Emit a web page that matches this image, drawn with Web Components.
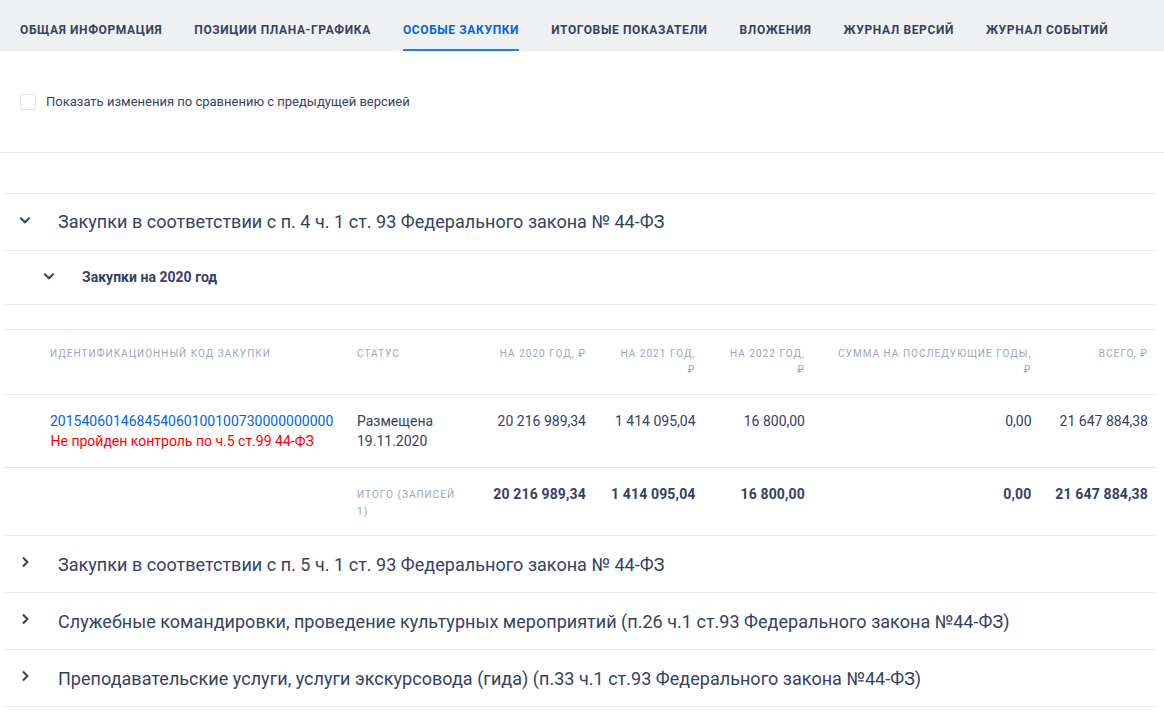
<!DOCTYPE html>
<html lang="ru">
<head>
<meta charset="utf-8">
<title>Особые закупки</title>
<style>
  html, body { margin: 0; padding: 0; background: #fff; overflow: hidden; }
  body { font-family: Roboto, "Liberation Sans", sans-serif; color: #344262; }
</style>
</head>
<body>
<plan-tabs>
  <tab-item>Общая информация</tab-item>
  <tab-item>Позиции плана-графика</tab-item>
  <tab-item active>Особые закупки</tab-item>
  <tab-item>Итоговые показатели</tab-item>
  <tab-item>Вложения</tab-item>
  <tab-item>Журнал версий</tab-item>
  <tab-item>Журнал событий</tab-item>
</plan-tabs>
<version-check>Показать изменения по сравнению с предыдущей версией</version-check>
<section-list>
  <acc-row open>Закупки в соответствии с п. 4 ч. 1 ст. 93 Федерального закона № 44-ФЗ</acc-row>
  <acc-row open sub>Закупки на 2020 год</acc-row>
  <purchase-table></purchase-table>
  <acc-row>Закупки в соответствии с п. 5 ч. 1 ст. 93 Федерального закона № 44-ФЗ</acc-row>
  <acc-row>Служебные командировки, проведение культурных мероприятий (п.26 ч.1 ст.93 Федерального закона №44-ФЗ)</acc-row>
  <acc-row>Преподавательские услуги, услуги экскурсовода (гида) (п.33 ч.1 ст.93 Федерального закона №44-ФЗ)</acc-row>
</section-list>

<script>
const define = (name, html) => {
  const template = document.createElement('template')
  template.innerHTML = html
  customElements.define(name, class extends HTMLElement {
    constructor () {
      super()
      this.attachShadow({ mode: 'open' }).appendChild(template.content.cloneNode(true))
    }
  })
}

define('plan-tabs', `
  <style>
    :host { display: flex; gap: 32px; height: 51px; padding-left: 20px; background: #eef0f2; }
  </style>
  <slot></slot>
`)

define('tab-item', `
  <style>
    :host {
      display: block; box-sizing: border-box; height: 51px; padding-top: 22px;
      font-size: 12px; line-height: 16px; font-weight: 700; letter-spacing: 0.625px;
      text-transform: uppercase; color: #344262; white-space: nowrap;
    }
    :host([active]) { color: #0065dd; border-bottom: 2px solid #1a82e2; }
  </style>
  <slot></slot>
`)

define('version-check', `
  <style>
    :host {
      display: flex; align-items: center; gap: 10px; box-sizing: border-box;
      height: 102px; padding-top: 1px; padding-left: 20px; border-bottom: 1px solid #e4e7f2;
      font-size: 13px; line-height: 16px; color: #344262;
    }
    .box { width: 14px; height: 14px; border: 1px solid #dfe2ea; border-radius: 2px; background: #fff; }
  </style>
  <div class="box"></div>
  <slot></slot>
`)

define('section-list', `
  <style>
    :host { display: block; margin: 40px 9px 0 5px; border-top: 1px solid #e4e7f2; }
  </style>
  <slot></slot>
`)

define('acc-row', `
  <style>
    :host {
      display: flex; align-items: center; box-sizing: border-box; height: 57px;
      padding-left: 12.5px; padding-top: 1px; border-bottom: 1px solid #e4e7f2;
      font-size: 18px; line-height: 24px; letter-spacing: 0.025px; color: #344262; white-space: nowrap;
    }
    :host([open]) { padding-top: 0; }
    :host([sub]) { height: 54px; padding-left: 36.5px; padding-bottom: 2px; font-size: 14px; font-weight: 700; }
    svg { flex: none; width: 14px; height: 14px; margin: -6px 26.5px 0 0; fill: none; stroke: #344262; stroke-width: 2; }
    :host([open]) svg { margin-top: -4.4px; }
    :host([sub]) svg { margin-top: -1px; }
    :host([open]) .right { display: none; }
    :host(:not([open])) .down { display: none; }
  </style>
  <svg viewBox="0 0 14 14"><path class="down" d="M2.3 4.6 7 9.3l4.7-4.7"/><path class="right" d="M5 2.5 9.4 7 5 11.5"/></svg>
  <slot></slot>
`)

define('purchase-table', `
  <style>
    :host { display: block; padding-top: 24px; }
    table { width: 100%; border-collapse: collapse; table-layout: fixed; border-top: 1px solid #e4e7f2; }
    td, th { padding: 0 7px 0 10px; vertical-align: top; border-bottom: 1px solid #e4e7f2; }
    th {
      height: 65px; padding-top: 16px; box-sizing: border-box; font-size: 10px; line-height: 16px;
      font-weight: 400; letter-spacing: 1.03px; text-transform: uppercase; color: #9aa5c2; text-align: left;
    }
    th.num { padding-left: 20px; }
    td { font-size: 14px; line-height: 20px; color: #344262; }
    .data td { height: 73px; padding-top: 16px; box-sizing: border-box; }
    .total td { height: 68px; padding-top: 16px; box-sizing: border-box; font-weight: 700; letter-spacing: 0.15px; }
    .num { text-align: right; }
    th:first-child, td:first-child { padding-left: 45px; padding-right: 0; }
    a { color: #0065dd; text-decoration: none; }
    .err { color: #ff0000; margin-left: 0.5px; }
    .total .label {
      padding-top: 18px; padding-right: 17px; font-size: 10px; line-height: 17px; font-weight: 400;
      letter-spacing: 1.03px; color: #9aa5c2; text-transform: uppercase;
    }
  </style>
  <table>
    <colgroup>
      <col style="width:342px"><col style="width:132px"><col style="width:114px"><col style="width:109.5px"><col style="width:109.5px"><col style="width:226.5px"><col style="width:116.5px">
    </colgroup>
    <tr>
      <th>Идентификационный код закупки</th><th>Статус</th>
      <th class="num">На 2020 год, ₽</th><th class="num">На 2021 год, ₽</th><th class="num">На 2022 год, ₽</th>
      <th class="num">Сумма на последующие годы, ₽</th><th class="num">Всего, ₽</th>
    </tr>
    <tr class="data">
      <td><a>201540601468454060100100730000000000</a><br><span class="err">Не пройден контроль по ч.5 ст.99 44-ФЗ</span></td>
      <td>Размещена<br>19.11.2020</td>
      <td class="num">20 216 989,34</td><td class="num">1 414 095,04</td><td class="num">16 800,00</td>
      <td class="num">0,00</td><td class="num">21 647 884,38</td>
    </tr>
    <tr class="total">
      <td></td><td class="label">Итого (записей 1)</td>
      <td class="num">20 216 989,34</td><td class="num">1 414 095,04</td><td class="num">16 800,00</td>
      <td class="num">0,00</td><td class="num">21 647 884,38</td>
    </tr>
  </table>
`)
</script>
</body>
</html>
